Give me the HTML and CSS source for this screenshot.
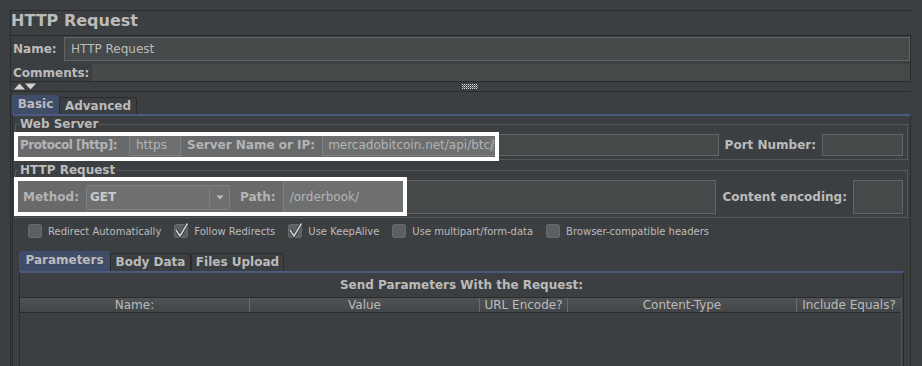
FILE: index.html
```html
<!DOCTYPE html>
<html lang="en">
<head>
    <meta charset="UTF-8">
    <meta name="viewport" content="width=device-width, initial-scale=1.0">
    <title>HTTP Request</title>
    <link rel="stylesheet" href="styles.css">
</head>
<body>
    <div class="window">
        <div class="title">HTTP Request</div>

        <div class="namebox">
            <div class="name-row">
                <span class="label name-label">Name:</span>
                <div class="field name-field">HTTP Request</div>
            </div>
            <div class="comments-row">
                <span class="label comments-label">Comments:</span>
                <div class="comments-field"></div>
            </div>
        </div>

        <div class="divider">
            <svg class="arrows" width="23" height="7" viewBox="0 0 23 7">
                <polygon points="0,6.5 5.5,0.5 11,6.5" fill="#d2d2d2"/>
                <polygon points="11,0.5 22,0.5 16.5,6.5" fill="#d2d2d2"/>
            </svg>
            <svg class="grip" width="16" height="5" viewBox="0 0 16 5">
                <defs>
                    <pattern id="dots" width="2" height="2" patternUnits="userSpaceOnUse">
                        <rect width="1" height="1" fill="#e0e0e0"/>
                        <rect x="1" y="1" width="1" height="1" fill="#8a8a8a"/>
                    </pattern>
                </defs>
                <rect width="16" height="5" fill="url(#dots)"/>
            </svg>
        </div>

        <div class="tabs">
            <div class="tab selected tab-basic">Basic</div>
            <div class="tab tab-advanced">Advanced</div>
        </div>

        <div class="tabpanel">
            <fieldset class="group">
                <legend>Web Server</legend>
                <div class="row server-row">
                    <span class="label protocol-label">Protocol [http]:</span>
                    <div class="field protocol-field">https</div>
                    <span class="label server-label">Server Name or IP:</span>
                    <div class="field server-field">mercadobitcoin.net/api/btc<span class="sel">/</span></div>
                    <span class="label port-label">Port Number:</span>
                    <div class="field port-field"></div>
                </div>
            </fieldset>

            <fieldset class="group group-request">
                <legend>HTTP Request</legend>
                <div class="row method-row">
                    <span class="label method-label">Method:</span>
                    <div class="combo">
                        <span class="combo-value">GET</span>
                        <span class="combo-arrow">
                            <svg width="8" height="5" viewBox="0 0 8 5"><polygon points="0.5,0.5 7.5,0.5 4,4.5" fill="#c8c8c8"/></svg>
                        </span>
                    </div>
                    <span class="label path-label">Path:</span>
                    <div class="field path-field">/orderbook/</div>
                    <span class="label encoding-label">Content encoding:</span>
                    <div class="field encoding-field"></div>
                </div>
            </fieldset>

            <div class="options">
                <div class="option">
                    <svg class="check" width="14" height="14" viewBox="0 0 14 14"><rect x="0.5" y="0.5" width="13" height="13" rx="2" fill="#5d6062" stroke="#6a6d6f"/></svg>
                    <span>Redirect Automatically</span>
                </div>
                <div class="option">
                    <svg class="check" width="14" height="14" viewBox="0 0 14 14"><rect x="0.5" y="0.5" width="13" height="13" rx="2" fill="#5d6062" stroke="#6a6d6f"/><path d="M2 6 L6 12 L13.5 -0.5" fill="none" stroke="#2e3031" stroke-width="3.2"/><path d="M2 6 L6 12 L13.5 -0.5" fill="none" stroke="#cfcfcf" stroke-width="1.6"/></svg>
                    <span>Follow Redirects</span>
                </div>
                <div class="option">
                    <svg class="check" width="14" height="14" viewBox="0 0 14 14"><rect x="0.5" y="0.5" width="13" height="13" rx="2" fill="#5d6062" stroke="#6a6d6f"/><path d="M2 6 L6 12 L13.5 -0.5" fill="none" stroke="#2e3031" stroke-width="3.2"/><path d="M2 6 L6 12 L13.5 -0.5" fill="none" stroke="#cfcfcf" stroke-width="1.6"/></svg>
                    <span>Use KeepAlive</span>
                </div>
                <div class="option">
                    <svg class="check" width="14" height="14" viewBox="0 0 14 14"><rect x="0.5" y="0.5" width="13" height="13" rx="2" fill="#5d6062" stroke="#6a6d6f"/></svg>
                    <span>Use multipart/form-data</span>
                </div>
                <div class="option">
                    <svg class="check" width="14" height="14" viewBox="0 0 14 14"><rect x="0.5" y="0.5" width="13" height="13" rx="2" fill="#5d6062" stroke="#6a6d6f"/></svg>
                    <span>Browser-compatible headers</span>
                </div>
            </div>

            <div class="subtabs">
                <div class="tab selected tab-params">Parameters</div>
                <div class="tab tab-body">Body Data</div>
                <div class="tab tab-files">Files Upload</div>
            </div>

            <div class="params">
                <div class="params-title">Send Parameters With the Request:</div>
                <div class="table">
                    <div class="thead">
                        <div class="th">Name:</div>
                        <div class="th">Value</div>
                        <div class="th">URL Encode?</div>
                        <div class="th">Content-Type</div>
                        <div class="th">Include Equals?</div>
                    </div>
                </div>
            </div>

            <!-- highlight boxes drawn over the screenshot -->
            <div class="mark mark-server"></div>
            <div class="mark mark-method"></div>
        </div>
    </div>
</body>
</html>
```

FILE: styles.css
```css
* {
    box-sizing: border-box;
}

body {
    margin: 0;
    width: 922px;
    height: 366px;
    overflow: hidden;
    background-color: #3c3f41;
    font-family: 'DejaVu Sans', 'Liberation Sans', sans-serif;
    font-size: 12px;
    color: #bbbbbb;
}

.window {
    margin: 10px 0 0 10px;
    width: 901px;
    height: 356px;
    border-top: 1px solid #2b2b2b;
    border-left: 1px solid #2b2b2b;
}

.title {
    height: 24px;
    line-height: 20px;
    font-size: 16px;
    font-weight: bold;
}

.label {
    font-weight: bold;
    white-space: nowrap;
    flex: none;
}

.field {
    background-color: #45494a;
    border: 1px solid #646464;
    padding-left: 6px;
    display: flex;
    align-items: center;
    white-space: nowrap;
    overflow: hidden;
    flex: none;
}

/* name + comments */
.namebox {
    margin-left: -1px;
    height: 47px;
    border: 1px solid #2b2b2b;
    padding-left: 2px;
}

.name-row {
    display: flex;
    align-items: center;
    height: 25px;
    padding-top: 1px;
}

.name-label {
    width: 51px;
}

.name-field {
    flex: 1;
    height: 24px;
}

.comments-row {
    display: flex;
    align-items: center;
    height: 17px;
    margin-top: 3px;
}

.comments-label {
    width: 79px;
}

.comments-field {
    flex: 1;
    height: 17px;
    background-color: #45494a;
}

.divider {
    display: flex;
    align-items: center;
    height: 10px;
    padding-left: 3px;
    border-bottom: 1px solid #2b2b2b;
}

.grip {
    margin-left: 425px;
}

/* tabs */
.tabs,
.subtabs {
    display: flex;
    align-items: flex-end;
}

.tabs {
    height: 22px;
    padding-left: 1px;
}

.tab {
    height: 17px;
    border: 1px solid #2b2b2b;
    border-bottom: none;
    border-radius: 3px 3px 0 0;
    font-weight: bold;
    text-align: center;
    line-height: 16px;
    white-space: nowrap;
}

.tab.selected {
    height: 19px;
    background-color: #3f4d68;
    border-color: #3f4d68;
}

.tab-basic { width: 47px; }
.tab-advanced { width: 78px; }

.tabpanel {
    position: relative;
    margin-left: 1px;
    height: 252px;
    border-top: 2px solid #4a5a80;
    border-left: 1px solid #2b2b2b;
    border-right: 1px solid #2b2b2b;
}

.group {
    margin: 1px 2px 0 2px;
    padding: 0 4px 3px 4px;
    border: 1px solid #56595b;
    min-width: 0;
}

.group legend {
    padding: 0 1px;
    margin-left: -1px;
    line-height: 14px;
    font-weight: bold;
}

.group-request {
    margin-top: 3px;
}

.row {
    display: flex;
    align-items: center;
    margin-top: 3px;
}

.server-row {
    height: 22px;
}

.server-row .field {
    height: 22px;
}

.protocol-label {
    width: 109px;
    letter-spacing: -0.5px;
}

.protocol-field {
    width: 52px;
    margin-right: 6px;
}

.server-label {
    margin-right: 7px;
}

.server-field {
    flex: 1;
    padding-left: 5px;
    margin-right: 6px;
}

.sel {
    background-color: #5a5d60;
}

.port-label {
    margin-right: 6px;
}

.port-field {
    width: 81px;
}

.method-row {
    height: 34px;
    padding-left: 3px;
}

.method-row .field {
    height: 34px;
}

.method-label {
    margin-right: 7px;
}

.combo {
    display: flex;
    align-items: stretch;
    width: 144px;
    height: 25px;
    margin-right: 10px;
    border: 1px solid #646464;
    border-radius: 3px;
    background-color: #45494a;
    flex: none;
}

.combo-value {
    flex: 1;
    padding-left: 3px;
    font-weight: bold;
    color: #dddddd;
    line-height: 23px;
}

.combo-arrow {
    width: 20px;
    display: flex;
    align-items: center;
    justify-content: center;
    border-left: 1px solid #646464;
    margin: 2px 0;
}

.path-label {
    margin-right: 7px;
}

.path-field {
    flex: 1;
    margin-right: 6px;
}

.encoding-label {
    margin-right: 6px;
}

.encoding-field {
    width: 50px;
}

/* checkboxes */
.options {
    display: flex;
    align-items: center;
    gap: 13px;
    height: 16px;
    margin-top: 5px;
    padding-left: 15px;
    font-size: 10px;
}

.option {
    display: flex;
    align-items: center;
    gap: 6px;
    white-space: nowrap;
}

.check {
    overflow: visible;
    flex: none;
}

/* parameters */
.subtabs {
    height: 21px;
    margin: 11px 6px 0 6px;
}

.subtabs .tab {
    height: 18px;
}

.subtabs .tab.selected {
    height: 20px;
}

.tab-params { width: 91px; }
.tab-body { width: 81px; }
.tab-files { width: 93px; }

.params {
    margin: 0 6px;
    height: 95px;
    border-top: 2px solid #4a5a80;
    border-left: 1px solid #2b2b2b;
    border-right: 1px solid #2b2b2b;
}

.params-title {
    height: 24px;
    line-height: 24px;
    text-align: center;
    font-weight: bold;
}

.table {
    margin-right: 1px;
    height: 80px;
    border-right: 1px solid #55585a;
}

.thead {
    display: grid;
    grid-template-columns: 229px 230px 88px 229px 1fr;
    height: 16px;
    border-top: 1px solid #2b2b2b;
    border-bottom: 1px solid #2b2b2b;
    background: linear-gradient(#505355, #434648);
}

.th {
    line-height: 14px;
    text-align: center;
    white-space: nowrap;
}

.th + .th {
    border-left: 1px solid #6a6d6f;
}

/* annotation boxes */
.mark {
    position: absolute;
    border: 4px solid #ffffff;
    background-color: rgba(170, 170, 170, 0.4);
}

.mark-server {
    left: 1px;
    top: 16px;
    width: 485px;
    height: 29px;
}

.mark-method {
    left: 1px;
    top: 61px;
    width: 393px;
    height: 39px;
}
```
